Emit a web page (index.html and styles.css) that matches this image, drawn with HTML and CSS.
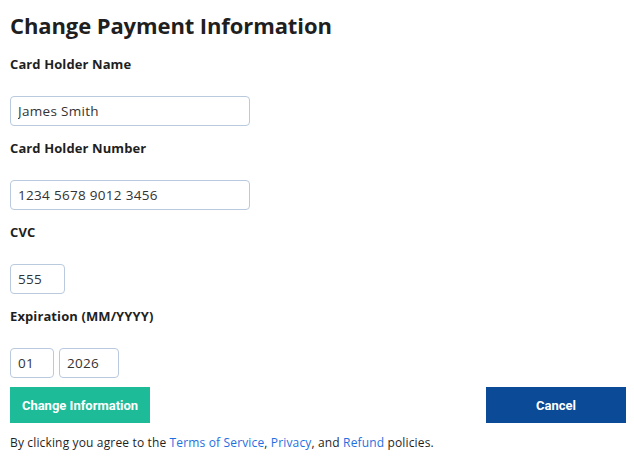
FILE: index.html
```html
<!DOCTYPE html>
<html lang="en">
<head>
  <meta charset="UTF-8" />
  <meta name="viewport" content="width=device-width, initial-scale=1.0"/>
  <title>Change Payment Information</title>
  <link rel="stylesheet" href="styles.css">
</head>
<body>
  <div class="payment">
    <h1>Change Payment Information</h1>

    <div class="field">
      <label for="holder-name">Card Holder Name</label>
      <input type="text" id="holder-name" class="input-wide" value="James Smith">
    </div>

    <div class="field">
      <label for="holder-number">Card Holder Number</label>
      <input type="text" id="holder-number" class="input-wide" value="1234 5678 9012 3456">
    </div>

    <div class="field">
      <label for="cvc">CVC</label>
      <input type="text" id="cvc" class="input-cvc" value="555">
    </div>

    <div class="field">
      <label for="exp-month">Expiration (MM/YYYY)</label>
      <div class="expiry">
        <input type="text" id="exp-month" class="input-month" value="01">
        <input type="text" id="exp-year" class="input-year" value="2026">
      </div>
    </div>

    <div class="actions">
      <button class="btn btn-change">Change Information</button>
      <button class="btn btn-cancel">Cancel</button>
    </div>

    <p class="terms">
      By clicking you agree to the <a href="#">Terms of Service</a>, <a href="#">Privacy</a>, and <a href="#">Refund</a> policies.
    </p>
  </div>
</body>
</html>
```

FILE: styles.css
```css
body {
  margin: 0;
  padding: 10px 8px 0 10px;
  font-family: 'Open Sans', sans-serif;
  color: #1f1f1f;
  background: #fff;
}
h1 {
  margin: 0 0 14px;
  font-size: 22px;
  line-height: 30px;
  font-weight: 700;
  letter-spacing: -0.1px;
}
.field {
  margin-bottom: 12px;
}
.field label {
  display: block;
  font-size: 13px;
  font-weight: 700;
  line-height: 21px;
  margin-bottom: 21px;
  letter-spacing: 0.1px;
}
.field input {
  display: block;
  box-sizing: border-box;
  height: 30px;
  padding: 0 7px;
  border: 1px solid #b9c9de;
  border-radius: 4px;
  font-family: 'Open Sans', sans-serif;
  font-size: 13.5px;
  letter-spacing: 0.3px;
  color: #333;
  background: #fff;
}
.input-wide {
  width: 240px;
}
.input-cvc {
  width: 55px;
}
.expiry {
  display: flex;
  gap: 5px;
}
.input-month {
  width: 44px;
}
.input-year {
  width: 60px;
}
.actions {
  display: flex;
  justify-content: space-between;
  margin-top: -3px;
}
.btn {
  width: 140px;
  height: 36px;
  border: 0;
  color: #fff;
  font-family: Roboto, 'Liberation Sans', sans-serif;
  font-size: 13px;
  font-weight: 700;
}
.btn-change {
  background: #1dbb98;
}
.btn-cancel {
  background: #0a4a96;
}
.terms {
  margin: 10px 0 0;
  font-size: 12px;
  line-height: 20px;
  letter-spacing: 0.15px;
}
.terms a {
  color: #1f6fe0;
  text-decoration: none;
}
```
